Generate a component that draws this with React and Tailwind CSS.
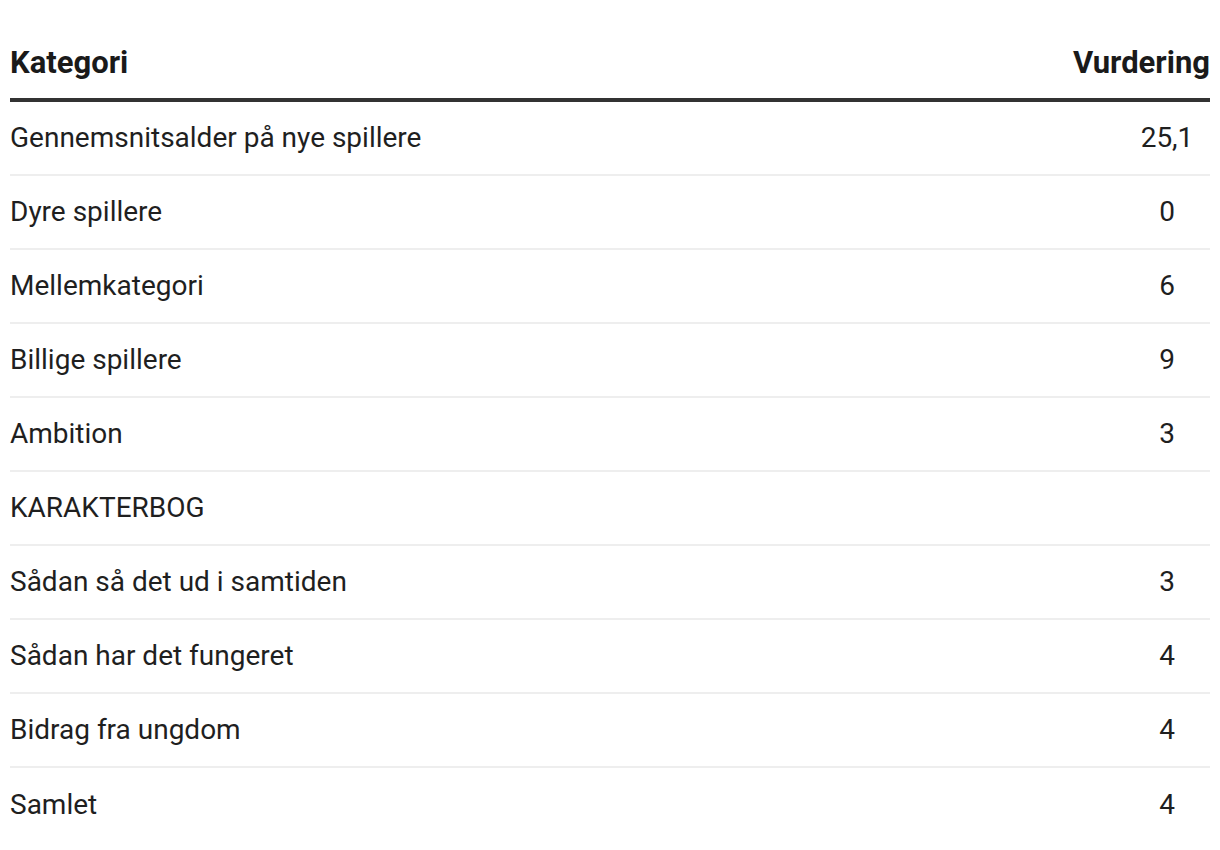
import React from "react";

const rows = [
  ["Gennemsnitsalder på nye spillere", "25,1"],
  ["Dyre spillere", "0"],
  ["Mellemkategori", "6"],
  ["Billige spillere", "9"],
  ["Ambition", "3"],
  ["KARAKTERBOG", ""],
  ["Sådan så det ud i samtiden", "3"],
  ["Sådan har det fungeret", "4"],
  ["Bidrag fra ungdom", "4"],
  ["Samlet", "4"],
];

export default function App() {
  return (
    <div className="min-h-screen bg-white px-[10px] pt-[34px] font-['Roboto',sans-serif] text-[#1f1f1f]">
      <div className="flex h-[68px] items-center justify-between border-b-4 border-[#333] pb-[5px] text-[31px] font-bold text-[#1a1a1a]">
        <span>Kategori</span>
        <span>Vurdering</span>
      </div>
      {rows.map(([label, value], i) => (
        <div
          key={label}
          className={
            "flex h-[74px] items-center justify-between text-[28px] " +
            (i < rows.length - 1 ? "border-b-2 border-[#eeeeee]" : "")
          }
        >
          <span>{label}</span>
          <span className="w-[86px] text-center">{value}</span>
        </div>
      ))}
    </div>
  );
}
